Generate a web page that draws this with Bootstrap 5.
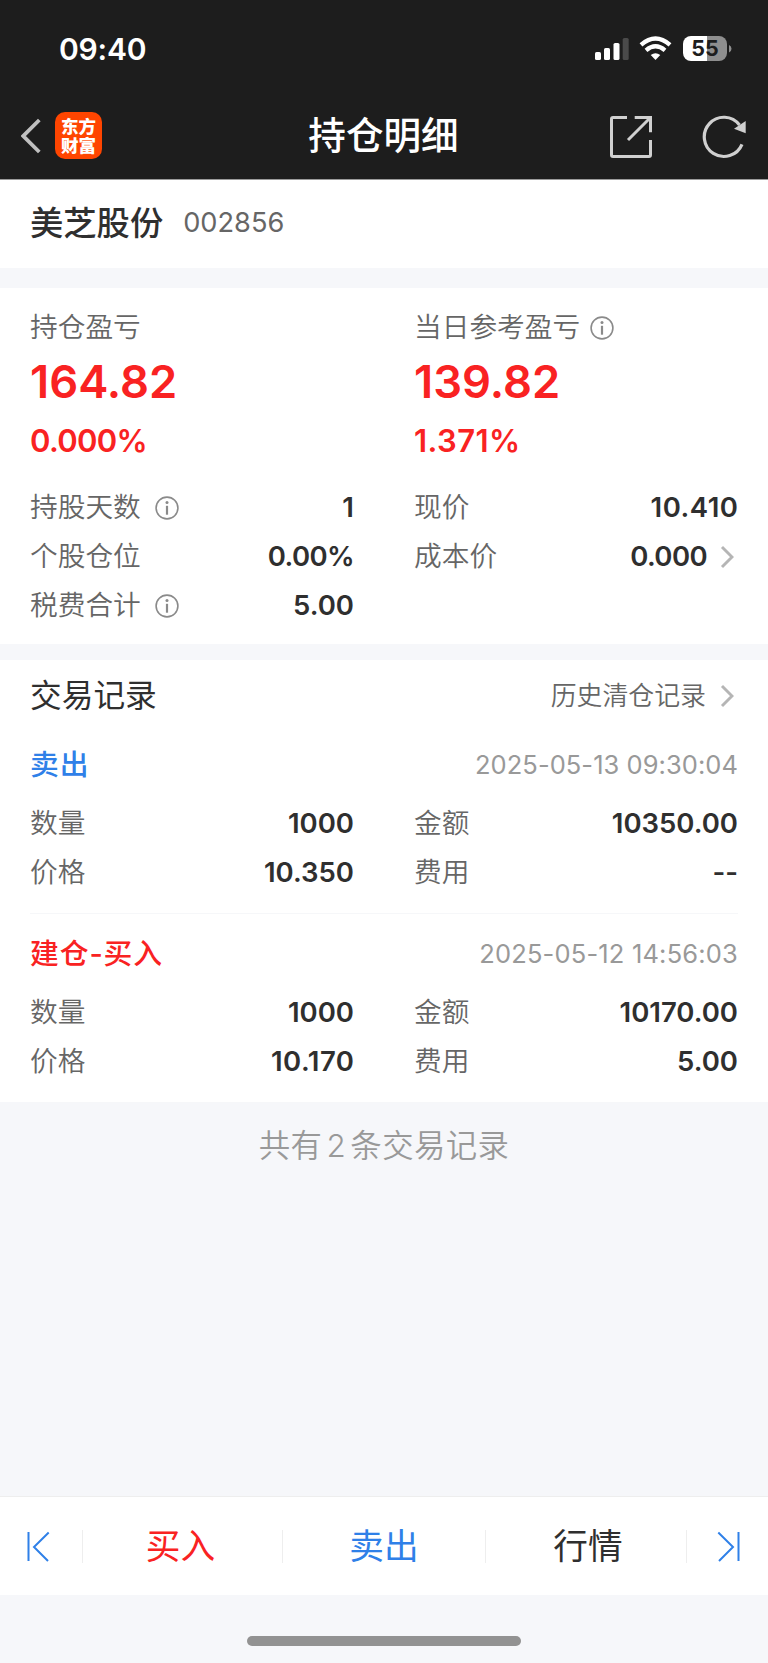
<!DOCTYPE html>
<html lang="zh-CN">
<head>
<meta charset="utf-8">
<meta name="viewport" content="width=device-width, initial-scale=1">
<title>持仓明细</title>
<link href="https://cdn.jsdelivr.net/npm/bootstrap@5.3.0/dist/css/bootstrap.min.css" rel="stylesheet">
<style>
body{font-family:Inter,"Noto Sans CJK SC",sans-serif;background:#f6f7fa;color:#2f2f2f;min-height:1663px;line-height:1}
svg{display:block;flex:none}
.topbar{background:#1d1d1d;height:180px;border-bottom:1px solid #9b9b9b;color:#fff}
.statusbar{height:97px;padding:1px 36px 0 59px}
.clock{font-size:30px;font-weight:600;letter-spacing:-.2px}
.titlebar{height:77px;padding:0 22px 0 21px;display:grid;grid-template-columns:1fr auto 1fr}
.page-title{font-size:37.6px;font-weight:500;color:#fff;line-height:1}
.applogo{width:47px;height:47px;border-radius:10px;background:#ff4500;font-size:17.5px;font-weight:900;line-height:19px}
.stock{height:88px;padding:0 30px;gap:20px}
.stock-name{font-size:33.3px;font-weight:500}
.stock-code{font-size:27.2px;color:#666;padding-bottom:2px}
.panel-summary{margin-top:20px;height:356px;padding:14px 30px 0}
.panel-trades{margin-top:16px;height:442px;padding:0 30px}
.cols{display:grid;grid-template-columns:324px 324px;column-gap:60px}
.sum-grid{margin-top:14px}
.lbl{font-size:27.7px;color:#666;font-weight:350}
.val{font-size:27.5px;font-weight:600}
.tight{letter-spacing:-.6px}
.loose{letter-spacing:.5px;margin-right:-.5px}
.up{color:#f92222}
.down{color:#2f80e8}
.sum-label{height:51px;gap:10px}
.sum-amt{height:58px;font-size:45.3px;font-weight:600}
.sum-pct{height:58px;font-size:31px;font-weight:600;letter-spacing:.4px}
.sum-pct.tight{letter-spacing:-.7px}
.kv{height:49.2px}
.kv .lbl{gap:14px}
.kv .val{gap:13px}
.sec-head{height:71px}
.sec-title{font-size:31.7px}
.sec-link{font-size:25.9px;color:#666;font-weight:350;gap:14px;padding-right:4px}
.cost{padding-right:4px}
.trade{border-bottom:1px solid #f6f7f9;height:189px}
.trade:first-of-type{height:183px}
.trade-head{height:68px}
.trade + .trade .trade-head{height:80px;margin-bottom:-6px}
.trade-type{font-size:28.8px;font-weight:500;letter-spacing:.9px}
.trade-time{font-size:25.5px;color:#999;letter-spacing:.05px}
.trade-time.loose{letter-spacing:.17px;margin-right:0}
.total{height:89px;font-size:31.4px;color:#999;font-weight:350;letter-spacing:.4px;word-spacing:-5px}
.actions{height:99px;border-top:1px solid #eee;background:#fff;display:grid;grid-template-columns:83px 200px 203px 201px 1fr}
.actions a{text-decoration:none;font-size:34.7px;height:33px;border-right:1px solid #eee}
.actions a:last-child{border:0}
.homearea{height:68px;padding-top:41px}
.homebar{width:274px;height:10px;border-radius:5px;background:#929292}
</style>
</head>
<body class="d-flex flex-column">
<svg class="d-none">
  <symbol id="info" viewBox="0 0 24 24"><circle cx="12" cy="12" r="10.900" fill="none" stroke="#8a8a8a" stroke-width="1.600"/><path d="M12 9.800v8.900" stroke="#8a8a8a" stroke-width="2.200"/><circle cx="12" cy="6.400" r="1.500" fill="#8a8a8a"/></symbol>
  <symbol id="next" viewBox="0 0 14 24"><path d="M2 2 12 12 2 22" fill="none" stroke="#b5b5b5" stroke-width="2.900"/></symbol>
</svg>
<header class="topbar">
  <div class="statusbar d-flex align-items-center justify-content-between">
    <span class="clock">09:40</span>
    <svg width="138" height="28" viewBox="0 0 138 28">
      <g fill="#fff"><rect x="1" y="17" width="6" height="8" rx="1.600"/><rect x="10" y="13" width="6" height="12" rx="1.600"/><rect x="19.500" y="8" width="6" height="17" rx="1.600"/></g>
      <rect x="28.700" y="3" width="6" height="22" rx="1.600" fill="#4a4a4a"/>
      <g fill="none" stroke="#fff" stroke-width="4.300"><path d="M47 9.800Q61.500-2.800 76 9.800"/><path d="M52 15.300Q61.500 7.300 71 15.300"/></g>
      <path d="M56.700 20Q61.500 16.400 66.300 20L61.500 25Z" fill="#fff"/>
      <path d="M113 1v25h-16a8 8 0 0 1-8-8V9a8 8 0 0 1 8-8Z" fill="#fff"/>
      <path d="M113 1h12a8 8 0 0 1 8 8v9a8 8 0 0 1-8 8h-12Z" fill="#8e8e8e"/>
      <path d="M135 10q2.500 1 2.500 3.700T135 17.500Z" fill="#8e8e8e"/>
      <text x="111" y="21.300" text-anchor="middle" font-size="21.500" font-weight="700" fill="#1d1d1d">55</text>
    </svg>
  </div>
  <nav class="titlebar align-items-center">
    <div class="d-flex align-items-center">
      <svg width="34" height="37" viewBox="0 0 34 37"><path d="M18.300 3 2.300 19 18.300 35" fill="none" stroke="#c0c0c0" stroke-width="3.800"/></svg>
      <div class="applogo d-flex flex-column align-items-center justify-content-center"><span>东方</span><span>财富</span></div>
    </div>
    <h1 class="page-title mb-0">持仓明细</h1>
    <div class="d-flex align-items-center justify-content-end gap-5">
      <svg width="44" height="47" viewBox="0 0 44 47" fill="none" stroke="#d0d0d0" stroke-width="3"><path d="M19 5.500H5Q3.500 5.500 3.500 7V43Q3.500 44.500 5 44.500H41Q42.500 44.500 42.500 43V28M26.700 5.500H42.500V20.300M42 6 20 28"/></svg>
      <svg width="46" height="47" viewBox="0 0 46 47"><path d="M42 32.300A19.600 19.600 0 1 1 39.500 13" fill="none" stroke="#d0d0d0" stroke-width="3.200"/><path d="M45.700 9V21.300L34 16.700Z" fill="#d0d0d0"/></svg>
    </div>
  </nav>
</header>
<main>
  <section class="stock bg-white d-flex align-items-center">
    <span class="stock-name">美芝股份</span><span class="stock-code">002856</span>
  </section>
  <section class="panel-summary bg-white">
    <div class="cols">
      <div>
        <div class="lbl sum-label d-flex align-items-center">持仓盈亏</div>
        <div class="sum-amt up d-flex align-items-center">164.82</div>
        <div class="sum-pct up d-flex align-items-center tight">0.000%</div>
      </div>
      <div>
        <div class="lbl sum-label d-flex align-items-center"><span>当日参考盈亏</span><svg width="24" height="24"><use href="#info"/></svg></div>
        <div class="sum-amt up d-flex align-items-center">139.82</div>
        <div class="sum-pct up d-flex align-items-center">1.371%</div>
      </div>
    </div>
    <div class="cols sum-grid">
      <div>
        <div class="kv d-flex align-items-center justify-content-between"><span class="lbl d-flex align-items-center">持股天数<svg width="24" height="24"><use href="#info"/></svg></span><span class="val">1</span></div>
        <div class="kv d-flex align-items-center justify-content-between"><span class="lbl">个股仓位</span><span class="val tight">0.00%</span></div>
        <div class="kv d-flex align-items-center justify-content-between"><span class="lbl d-flex align-items-center">税费合计<svg width="24" height="24"><use href="#info"/></svg></span><span class="val">5.00</span></div>
      </div>
      <div>
        <div class="kv d-flex align-items-center justify-content-between"><span class="lbl">现价</span><span class="val loose">10.410</span></div>
        <div class="kv d-flex align-items-center justify-content-between"><span class="lbl">成本价</span><span class="val cost tight d-flex align-items-center">0.000<svg width="14" height="24"><use href="#next"/></svg></span></div>
      </div>
    </div>
  </section>
  <section class="panel-trades bg-white">
    <div class="sec-head d-flex align-items-center justify-content-between"><span class="sec-title">交易记录</span><span class="sec-link d-flex align-items-center">历史清仓记录<svg width="14" height="24"><use href="#next"/></svg></span></div>
    <article class="trade">
      <div class="trade-head d-flex align-items-center justify-content-between"><span class="trade-type down">卖出</span><span class="trade-time">2025-05-13 09:30:04</span></div>
      <div class="cols">
        <div class="kv d-flex align-items-center justify-content-between"><span class="lbl">数量</span><span class="val">1000</span></div>
        <div class="kv d-flex align-items-center justify-content-between"><span class="lbl">金额</span><span class="val">10350.00</span></div>
        <div class="kv d-flex align-items-center justify-content-between"><span class="lbl">价格</span><span class="val">10.350</span></div>
        <div class="kv d-flex align-items-center justify-content-between"><span class="lbl">费用</span><span class="val">--</span></div>
      </div>
    </article>
    <article class="trade">
      <div class="trade-head d-flex align-items-center justify-content-between"><span class="trade-type up">建仓-买入</span><span class="trade-time loose">2025-05-12 14:56:03</span></div>
      <div class="cols">
        <div class="kv d-flex align-items-center justify-content-between"><span class="lbl">数量</span><span class="val">1000</span></div>
        <div class="kv d-flex align-items-center justify-content-between"><span class="lbl">金额</span><span class="val">10170.00</span></div>
        <div class="kv d-flex align-items-center justify-content-between"><span class="lbl">价格</span><span class="val loose">10.170</span></div>
        <div class="kv d-flex align-items-center justify-content-between"><span class="lbl">费用</span><span class="val">5.00</span></div>
      </div>
    </article>
  </section>
  <div class="total d-flex align-items-center justify-content-center"><span>共有 2 条交易记录</span></div>
</main>
<footer class="mt-auto">
  <nav class="actions align-items-center">
    <a href="#" class="d-flex align-items-center ps-4"><svg width="30" height="33" viewBox="0 0 30 33" fill="none" stroke="#2f80e8" stroke-width="2"><path d="M4.500 2V31M24.700 2.500 10 17 24 31"/></svg></a>
    <a href="#" class="up d-flex align-items-center justify-content-center pe-1">买入</a>
    <a href="#" class="down d-flex align-items-center justify-content-center">卖出</a>
    <a href="#" class="text-reset d-flex align-items-center justify-content-center ps-1">行情</a>
    <a href="#" class="d-flex align-items-center justify-content-end pe-4"><svg width="30" height="33" viewBox="0 0 30 33" fill="none" stroke="#2f80e8" stroke-width="2"><path d="M24.500 2V31M4.300 2.500 19 17 5 31"/></svg></a>
  </nav>
  <div class="homearea"><div class="homebar mx-auto"></div></div>
</footer>
</body>
</html>
